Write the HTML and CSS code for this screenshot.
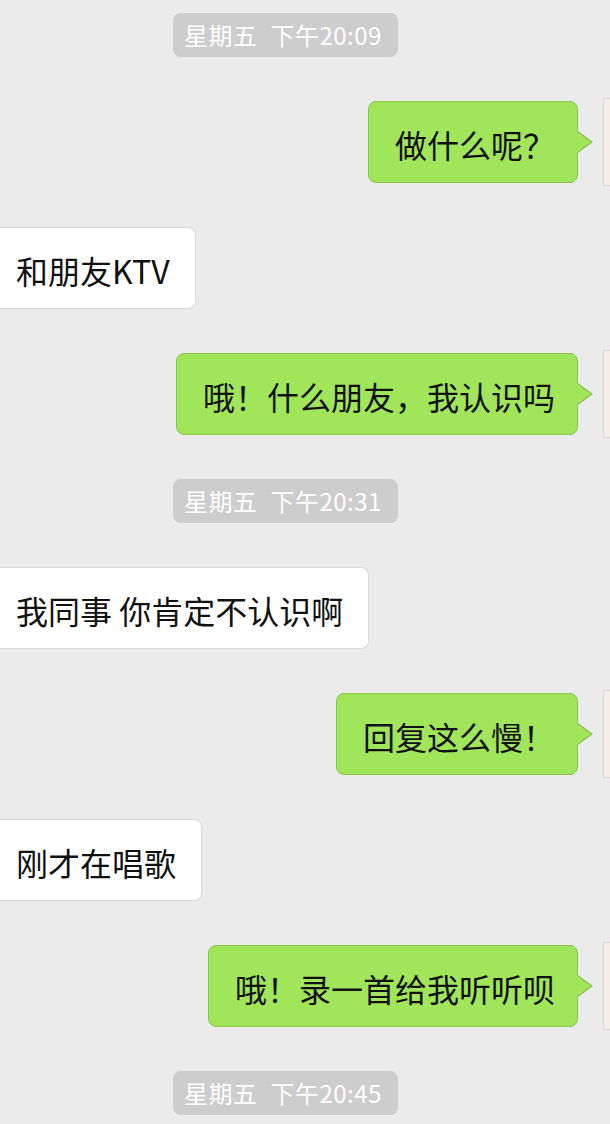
FILE: index.html
```html
<!DOCTYPE html>
<html lang="zh-CN">
<head>
  <meta charset="UTF-8">
  <title>聊天记录</title>
  <link rel="stylesheet" href="styles.css">
</head>
<body>
  <div class="chat">
    <div class="time">星期五 下午20:09</div>
    <div class="msg msg-me">
      <div class="bubble">做什么呢&#xFF1F;</div>
      <div class="avatar"></div>
    </div>
    <div class="msg msg-other">
      <div class="bubble">和朋友KTV</div>
    </div>
    <div class="msg msg-me">
      <div class="bubble">哦&#xFF01;什么朋友&#xFF0C;我认识吗</div>
      <div class="avatar"></div>
    </div>
    <div class="time">星期五 下午20:31</div>
    <div class="msg msg-other">
      <div class="bubble">我同事 你肯定不认识啊</div>
    </div>
    <div class="msg msg-me">
      <div class="bubble">回复这么慢&#xFF01;</div>
      <div class="avatar"></div>
    </div>
    <div class="msg msg-other">
      <div class="bubble">刚才在唱歌</div>
    </div>
    <div class="msg msg-me">
      <div class="bubble">哦&#xFF01;录一首给我听听呗</div>
      <div class="avatar"></div>
    </div>
    <div class="time">星期五 下午20:45</div>
  </div>
</body>
</html>
```

FILE: styles.css
```css
body {
  margin: 0;
  padding: 0;
  background: #ebebeb;
  overflow: hidden;
  font-family: "Noto Sans CJK SC", "Noto Sans", sans-serif;
  color: #111;
}
.chat {
  display: flex;
  flex-direction: column;
  gap: 44px;
  padding-top: 13px;
}
.time {
  align-self: flex-start;
  margin-left: 173px;
  height: 44px;
  line-height: 43px;
  padding: 0 16px 0 11px;
  background: #cdcdcd;
  border-radius: 8px;
  color: #fff;
  font-size: 24px;
  word-spacing: 7px;
  letter-spacing: 0.5px;
}
.msg {
  display: flex;
  align-items: center;
}
.msg-me {
  justify-content: flex-end;
  gap: 25px;
}
.bubble {
  position: relative;
  height: 82px;
  box-sizing: border-box;
  line-height: 78px;
  padding-top: 3px;
  font-size: 32px;
  border-radius: 8px;
  white-space: nowrap;
}
.msg-me .bubble {
  background: #a1e65a;
  border: 1px solid #8cc451;
  padding-left: 26px;
  padding-right: 22px;
}
.msg-me .bubble::before,
.msg-me .bubble::after {
  content: "";
  position: absolute;
  border-style: solid;
  border-color: transparent;
}
.msg-me .bubble::before {
  right: -16px;
  top: 29px;
  border-width: 11px 0 11px 15px;
  border-left-color: #8cc451;
}
.msg-me .bubble::after {
  right: -14px;
  top: 30px;
  border-width: 10px 0 10px 14px;
  border-left-color: #a1e65a;
}
.msg-other .bubble {
  background: #fff;
  border: 1px solid #d9d9d9;
  border-left: none;
  border-radius: 0 8px 8px 0;
  padding-left: 16px;
  padding-right: 25px;
}
/* avatar is cut off by the right edge, only a sliver shows */
.avatar {
  flex: none;
  width: 7px;
  height: 88px;
  margin: -3px 0;
  box-sizing: border-box;
  background: #f4efe6;
  border: 1px solid #d8d6d2;
  border-right: none;
}
```
